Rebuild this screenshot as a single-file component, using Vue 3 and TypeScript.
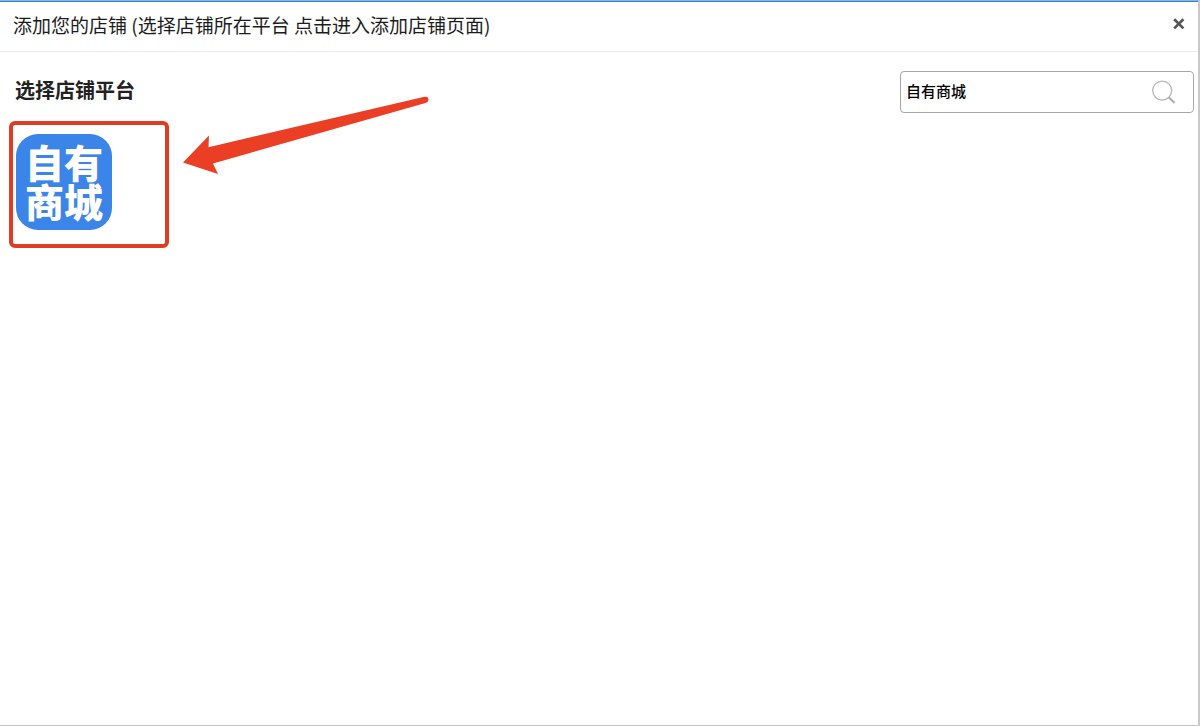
<script setup lang="ts">
import { computed, ref } from 'vue'

interface Platform {
  name: string
}

const platforms: Platform[] = [{ name: '自有商城' }]
const keyword = ref('自有商城')
const open = ref(true)
const visible = computed(() => platforms.filter((p) => p.name.includes(keyword.value.trim())))
</script>

<template>
  <section v-if="open" class="dialog" role="dialog" aria-labelledby="dialog-title">
    <header class="head">
      <h1 id="dialog-title" class="title">添加您的店铺 (选择店铺所在平台 点击进入添加店铺页面)</h1>
      <button class="close" type="button" aria-label="关闭" @click="open = false">
        <svg width="12" height="12" viewBox="0 0 12 12" aria-hidden="true">
          <path d="M1.2 1.2 10.4 10.4M10.4 1.2 1.2 10.4" stroke="#555" stroke-width="2.7" />
        </svg>
      </button>
    </header>
    <main class="body">
      <div class="toolbar">
        <h2 class="subtitle">选择店铺平台</h2>
        <form class="search" role="search" @submit.prevent>
          <input v-model="keyword" class="field" type="text" aria-label="搜索平台" />
          <button class="go" type="submit" aria-label="搜索">
            <svg width="26" height="26" viewBox="0 0 26 26" fill="none" aria-hidden="true">
              <circle cx="11.2" cy="11.6" r="9.5" stroke="#b5b5b5" stroke-width="1.3" />
              <path d="m17.8 18.2 5.8 5.8" stroke="#b0b0b0" stroke-width="2.2" />
            </svg>
          </button>
        </form>
      </div>
      <div class="platforms">
        <div v-for="p in visible" :key="p.name" class="item">
          <button class="logo" type="button">
            <span class="name">{{ p.name }}</span>
          </button>
          <svg class="arrow" width="248" height="80" viewBox="0 0 248 80" aria-hidden="true">
            <path
              d="M1 66.5 27 39.5 26.5 51.2 242.5 .8Q246.5 0 246.5 4 246.5 6.2 243.5 7L31 67.5 36 78Z"
              fill="#ea3f25"
            />
          </svg>
        </div>
      </div>
    </main>
  </section>
</template>

<style>
body {
  margin: 0;
  background: #fff;
}
</style>

<style scoped>
.dialog {
  box-sizing: border-box;
  min-height: 100vh;
  padding-top: 1px;
  border-top: 1px solid #7db8ef;
  border-right: 2px solid #c9c9c9;
  border-bottom: 1px solid #c4c4c4;
  box-shadow: inset 0 1px #3f7dc8;
  font-family: "Noto Sans CJK SC", sans-serif;
  background: #fff;
}

.head {
  display: flex;
  align-items: center;
  justify-content: space-between;
  height: 49px;
  padding: 0 13px;
  border-bottom: 1px solid #ebebeb;
}

.title {
  margin: 0;
  padding-bottom: 4px;
  font-size: 19px;
  font-weight: 400;
  line-height: 28px;
  color: #1c1c1c;
}

button {
  padding: 0;
  border: 0;
  background: none;
  font-family: inherit;
  cursor: pointer;
}

.close {
  display: flex;
  padding-bottom: 6px;
}

.body {
  padding: 19px 4px 0 9px;
}

.toolbar {
  display: flex;
  align-items: center;
  justify-content: space-between;
}

.subtitle {
  margin: 0 0 4px 6px;
  font-size: 20px;
  font-weight: 700;
  line-height: 28px;
  color: #222;
}

.search {
  display: flex;
  align-items: center;
  box-sizing: border-box;
  width: 294px;
  height: 42px;
  padding: 0 16px 0 5px;
  border: 1px solid #a6a6a6;
  border-radius: 4px;
}

.field {
  flex: 1;
  min-width: 0;
  padding: 0 0 2px;
  border: 0;
  outline: 0;
  font-family: inherit;
  font-size: 15px;
  font-weight: 500;
  line-height: 24px;
  color: #000;
  background: none;
}

.go {
  display: flex;
}

.platforms {
  display: flex;
  margin-top: 8px;
}

.item {
  position: relative;
  box-sizing: border-box;
  width: 160px;
  padding: 9px 3px 14px;
  border: 4px solid #e03c24;
  border-radius: 6px;
}

.logo {
  display: flex;
  align-items: center;
  justify-content: center;
  width: 96px;
  height: 96px;
  padding-bottom: 3px;
  border-radius: 22px;
  background: #3b84e8;
  color: #fff;
}

.name {
  width: 78px;
  font-size: 39px;
  font-weight: 900;
  line-height: 39px;
}

.arrow {
  position: absolute;
  top: -29px;
  left: 169px;
}
</style>
